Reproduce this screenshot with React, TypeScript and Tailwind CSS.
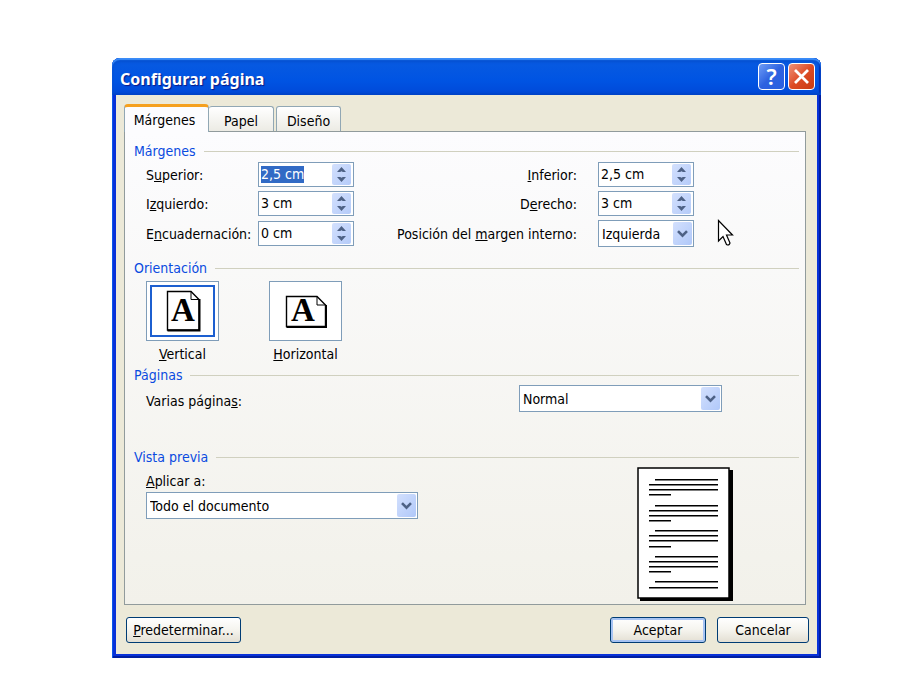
import { useEffect, useRef, useState } from "react";
import type { ReactNode, RefObject } from "react";

const fieldBorder = "border border-[#7f9db9] bg-white";

function Section({ title, className, children }: { title: string; className: string; children: ReactNode }) {
  return (
    <section className={className}>
      <h2 className="flex h-5 items-center gap-2 text-[#0a4be0]">
        {title}
        <span className="h-px flex-1 bg-[#d0d0bf]" />
      </h2>
      {children}
    </section>
  );
}

function Spinner({ id, initial, inputRef }: { id: string; initial: string; inputRef?: RefObject<HTMLInputElement | null> }) {
  const [value, setValue] = useState(initial);
  const step = (delta: number) => {
    const next = Math.max(0, parseFloat(value.replace(",", ".")) + delta);
    setValue(`${String(Math.round(next * 10) / 10).replace(".", ",")} cm`);
  };
  return (
    <div className={`flex h-[25px] w-24 items-center ${fieldBorder}`}>
      <input
        id={id}
        ref={inputRef}
        value={value}
        onChange={(e) => setValue(e.target.value)}
        className="h-[17px] min-w-0 flex-1 pl-[2px] leading-[17px] outline-none selection:bg-[#316ac5] selection:text-white"
      />
      <div className="mr-[2px] flex h-[21px] w-[19px] flex-col rounded-xs bg-linear-to-br from-[#d3e0fd] to-[#b5cbf9]">
        <button type="button" aria-label="Aumentar" onClick={() => step(0.1)} className="flex flex-1 items-center justify-center">
          <svg width="9" height="5" viewBox="0 0 9 5"><path d="M0 5 4.500 0 9 5H5.800L4.500 4.200 3.200 5Z" fill="#4d6185" /></svg>
        </button>
        <button type="button" aria-label="Disminuir" onClick={() => step(-0.1)} className="flex flex-1 items-center justify-center">
          <svg width="9" height="5" viewBox="0 0 9 5"><path d="M0 0 4.500 5 9 0H5.800L4.500 0.800 3.200 0Z" fill="#4d6185" /></svg>
        </button>
      </div>
    </div>
  );
}

function Dropdown({ id, options, className }: { id: string; options: string[]; className: string }) {
  return (
    <div className={`relative h-[27px] ${fieldBorder} ${className}`}>
      <select id={id} className="block h-full w-full appearance-none bg-transparent pr-5 pl-[3px] outline-none">
        {options.map((option) => (
          <option key={option}>{option}</option>
        ))}
      </select>
      <span className="pointer-events-none absolute top-px right-px flex h-[23px] w-[19px] items-center justify-center rounded-xs bg-linear-to-br from-[#d3e0fd] to-[#b0c8f9]">
        <svg width="11" height="8" viewBox="0 0 11 8">
          <path d="M1 1.200 5.500 5.700 10 1.200" fill="none" stroke="#4d6185" strokeWidth="2.600" />
        </svg>
      </span>
    </div>
  );
}

function PageIcon({ landscape }: { landscape: boolean }) {
  return landscape ? (
    <svg width="42" height="34" viewBox="0 0 42 34" className="overflow-visible">
      <path d="M1.500 2.500H32L40.500 11V32.500H1.500Z" fill="#fff" stroke="#000" strokeWidth="1.400" />
      <path d="M32 2.500V11H40.500" fill="none" stroke="#000" />
      <path d="M1.500 33H41V11" fill="none" stroke="#000" strokeWidth="2" />
      <text x="6" y="27" fontFamily="Liberation Serif, serif" fontWeight="bold" fontSize="33">A</text>
    </svg>
  ) : (
    <svg width="35" height="42" viewBox="0 0 35 42" className="overflow-visible">
      <path d="M2.500 1.500H26L34 9.500V40H2.500Z" fill="#fff" stroke="#000" strokeWidth="1.400" />
      <path d="M26 1.500V9.500H34" fill="none" stroke="#000" />
      <path d="M2.500 40.500H34.500V9" fill="none" stroke="#000" strokeWidth="2" />
      <text x="6" y="31" fontFamily="Liberation Serif, serif" fontWeight="bold" fontSize="33">A</text>
    </svg>
  );
}

function Orientation({ landscape, checked, onSelect, children }: { landscape: boolean; checked: boolean; onSelect: () => void; children: ReactNode }) {
  return (
    <label className="relative flex w-[73px] flex-col items-center gap-1">
      <input type="radio" name="orientation" checked={checked} onChange={onSelect} className="sr-only" />
      <span className={`flex h-[60px] w-full p-[3px] ${fieldBorder}`}>
        <span className={`flex flex-1 items-center justify-center border-2 ${checked ? "border-[#1c5fd0]" : "border-transparent"}`}>
          <PageIcon landscape={landscape} />
        </span>
      </span>
      <span className="leading-[18px]">{children}</span>
    </label>
  );
}

function PagePreview() {
  const rows = Array.from({ length: 18 }, (_, i) => i);
  return (
    <svg width="97" height="134" viewBox="0 0 97 134" role="img" aria-label="Vista previa">
      <rect x="3" y="3" width="93" height="131" />
      <rect x="1" y="1" width="91" height="130" fill="#fff" stroke="#000" strokeWidth="1.500" />
      {rows.map((i) => {
        const group = Math.floor(i / 4);
        const line = i % 4;
        const y = 12 + Math.round(group * 25.600 + line * 5.130);
        return <rect key={i} x={line === 0 ? 18 : 12} y={y} width={line === 0 ? 63 : line === 3 ? 22 : 69} height="1.500" />;
      })}
    </svg>
  );
}

const buttonBase =
  "h-[26px] rounded-[3px] border border-[#003c74] bg-linear-to-b from-white via-[#f5f4ee] to-[#e3dfd3] leading-none";
const tabBase =
  "h-[25px] rounded-t-[3px] border border-b-0 border-[#91a7b4] bg-linear-to-b from-white to-[#ecebe4]";

export default function App() {
  const topField = useRef<HTMLInputElement>(null);
  const [landscape, setLandscape] = useState(false);

  useEffect(() => {
    topField.current?.focus();
    topField.current?.select();
  }, []);

  return (
    <main className="min-h-screen bg-white pt-[58px] pr-[79px] pb-10 pl-28 font-['DejaVu_Sans_Condensed','DejaVu_Sans',sans-serif] text-sm text-black">
      <div role="dialog" aria-labelledby="dialog-title" className="rounded-t-lg bg-[#0831d9] shadow-[inset_1px_1px_0_#0a57e8,inset_-2px_-2px_0_#001ea0]">
        <header className="flex h-[37px] items-center gap-[3px] rounded-t-lg bg-linear-to-b from-[#0a5be0] via-[#0054e3] via-60% to-[#0048d8] pr-[6px] pl-2 shadow-[inset_0_2px_1px_#3b8cf8,inset_0_4px_3px_#0550d0,inset_0_-2px_2px_#0044c8,inset_-2px_0_1px_#0028b0]">
          <h1 id="dialog-title" className="flex-1 pt-1 font-['Noto_Sans',sans-serif] text-base leading-none font-bold text-white [text-shadow:1px_1px_1px_#0a1883]">
            Configurar página
          </h1>
          <button type="button" aria-label="Ayuda" className="flex h-[27px] w-[27px] items-center justify-center rounded-[4px] border border-white bg-linear-to-br from-[#6f9cf6] via-[#2d62e0] to-[#2a60e0] pb-[2px] font-['Noto_Sans',sans-serif] text-[22px] leading-none font-semibold text-white">
            ?
          </button>
          <button type="button" aria-label="Cerrar" className="flex h-[27px] w-[27px] items-center justify-center rounded-[4px] border border-white bg-linear-to-br from-[#ee9076] via-[#dd4b25] to-[#c93b12]">
            <svg width="17" height="17" viewBox="0 0 17 17"><path d="M2 2 15 15M15 2 2 15" stroke="#fff" strokeWidth="2.800" /></svg>
          </button>
        </header>

        <div className="mx-1 bg-[#ece9d8] pt-[9px] pr-2 pb-[11px] pl-2">
          <div role="tablist" className="relative -mb-px flex items-end">
            <button type="button" role="tab" aria-selected="true" className="h-[28px] w-[85px] rounded-t-[4px] border border-t-[3px] border-b-0 border-[#91a7b4] border-t-[#f5a01e] bg-[#fcfcfe] pr-1">
              Márgenes
            </button>
            <button type="button" role="tab" aria-selected="false" className={`${tabBase} mb-px w-[65px] border-l-0 pt-1`}>Papel</button>
            <button type="button" role="tab" aria-selected="false" className={`${tabBase} mb-px ml-[2px] w-[65px] pt-1`}>Diseño</button>
          </div>

          <div role="tabpanel" className="mr-[3px] border border-[#919b9c] bg-linear-to-b from-[#fcfcfe] to-[#f2f1ea] pt-[9px] pr-[6px] pb-[3px] pl-[9px]">
            <Section title="Márgenes" className="relative">
              <div className="mt-px grid grid-cols-[112px_96px_1fr_96px] items-center gap-y-1 pr-[105px] pl-3">
                <label htmlFor="top">S<u>u</u>perior:</label>
                <Spinner id="top" initial="2,5 cm" inputRef={topField} />
                <label htmlFor="bottom" className="pr-[21px] text-right"><u>I</u>nferior:</label>
                <Spinner id="bottom" initial="2,5 cm" />
                <label htmlFor="left">I<u>z</u>quierdo:</label>
                <Spinner id="left" initial="3 cm" />
                <label htmlFor="right" className="pr-[21px] text-right">D<u>e</u>recho:</label>
                <Spinner id="right" initial="3 cm" />
                <label htmlFor="gutter">E<u>n</u>cuadernación:</label>
                <Spinner id="gutter" initial="0 cm" />
                <label htmlFor="gutter-position" className="pr-[21px] text-right">Posición del <u>m</u>argen interno:</label>
                <Dropdown id="gutter-position" options={["Izquierda", "Superior"]} className="w-24" />
              </div>
              <svg className="pointer-events-none absolute right-[65px] bottom-0" width="17" height="28" viewBox="0 0 17 28">
                <path d="M1.500 1.500V22L6 17.500 9.500 25.500Q12 27 13 24L9.500 16H15.500Z" fill="#fff" stroke="#000" strokeWidth="1.200" />
              </svg>
            </Section>

            <Section title="Orientación" className="mt-[11px]">
              <div className="mt-[3px] flex gap-[50px] pl-3">
                <Orientation landscape={false} checked={!landscape} onSelect={() => setLandscape(false)}><u>V</u>ertical</Orientation>
                <Orientation landscape checked={landscape} onSelect={() => setLandscape(true)}><u>H</u>orizontal</Orientation>
              </div>
            </Section>

            <Section title="Páginas" className="mt-[2px]">
              <div className="flex items-center justify-between pr-[77px] pl-3">
                <label htmlFor="pages" className="pt-1">Varias página<u>s</u>:</label>
                <Dropdown id="pages" options={["Normal", "Márgenes simétricos", "Dos páginas por hoja", "Libro plegado"]} className="w-[203px]" />
              </div>
            </Section>

            <Section title="Vista previa" className="mt-[35px]">
              <div className="flex items-start justify-between pr-[65px] pl-3">
                <div className="pt-1">
                  <label htmlFor="apply" className="block leading-[21px]"><u>A</u>plicar a:</label>
                  <Dropdown id="apply" options={["Todo el documento", "De aquí en adelante"]} className="w-[272px]" />
                </div>
                <PagePreview />
              </div>
            </Section>
          </div>

          <footer className="mt-3 flex pl-[2px]">
            <button type="button" className={`${buttonBase} w-[115px]`}><u>P</u>redeterminar...</button>
            <button type="button" className={`${buttonBase} ml-auto w-24 shadow-[inset_0_0_0_2px_#a6c3f3]`}>Aceptar</button>
            <button type="button" className={`${buttonBase} ml-[11px] w-[92px]`}>Cancelar</button>
          </footer>
        </div>
        <div className="h-1" />
      </div>
    </main>
  );
}
